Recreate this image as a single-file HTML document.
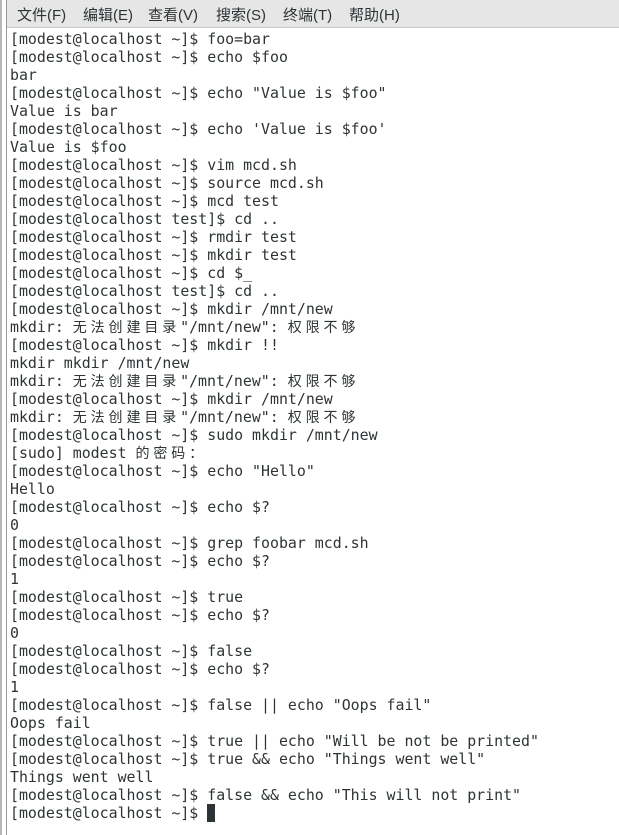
<!DOCTYPE html>
<html><head><meta charset="utf-8"><style>
html,body{margin:0;padding:0;width:619px;height:835px;overflow:hidden;background:#fff}
.l1{position:absolute;left:0;top:0;width:2px;height:835px;background:#b8b8b8}
.l2{position:absolute;left:6px;top:0;width:1px;height:835px;background:#9a9a9a}
.menu{position:absolute;left:7px;top:0;width:612px;height:27px;background:#e6e6e6;border-bottom:1px solid #c8c8c8;font:15px "Liberation Sans","Noto Sans CJK SC",sans-serif;color:#2e3436}
.menu span{position:absolute;top:4px}
pre{position:absolute;left:10px;top:29.5px;margin:0;font:14.9px/18px "DejaVu Sans Mono","Liberation Mono",monospace;color:#2e3436}
.c{display:inline-block;width:17.9px;height:18px;line-height:18px;vertical-align:top;overflow:hidden;text-align:left;font-family:"Noto Sans CJK SC",sans-serif;font-size:14px}
.cur{display:inline-block;width:8px;height:18px;background:#2e3436;vertical-align:top}
</style></head><body>
<div class="l1"></div><div class="l2"></div>
<div class="menu"><span style="left:10px">文件(F)</span><span style="left:76px">编辑(E)</span><span style="left:141px">查看(V)</span><span style="left:209px">搜索(S)</span><span style="left:276px">终端(T)</span><span style="left:342px">帮助(H)</span></div>
<pre>[modest@localhost ~]$ foo=bar
[modest@localhost ~]$ echo $foo
bar
[modest@localhost ~]$ echo "Value is $foo"
Value is bar
[modest@localhost ~]$ echo 'Value is $foo'
Value is $foo
[modest@localhost ~]$ vim mcd.sh
[modest@localhost ~]$ source mcd.sh
[modest@localhost ~]$ mcd test
[modest@localhost test]$ cd ..
[modest@localhost ~]$ rmdir test
[modest@localhost ~]$ mkdir test
[modest@localhost ~]$ cd $_
[modest@localhost test]$ cd ..
[modest@localhost ~]$ mkdir /mnt/new
mkdir: <span class="c">无</span><span class="c">法</span><span class="c">创</span><span class="c">建</span><span class="c">目</span><span class="c">录</span>"/mnt/new": <span class="c">权</span><span class="c">限</span><span class="c">不</span><span class="c">够</span>
[modest@localhost ~]$ mkdir !!
mkdir mkdir /mnt/new
mkdir: <span class="c">无</span><span class="c">法</span><span class="c">创</span><span class="c">建</span><span class="c">目</span><span class="c">录</span>"/mnt/new": <span class="c">权</span><span class="c">限</span><span class="c">不</span><span class="c">够</span>
[modest@localhost ~]$ mkdir /mnt/new
mkdir: <span class="c">无</span><span class="c">法</span><span class="c">创</span><span class="c">建</span><span class="c">目</span><span class="c">录</span>"/mnt/new": <span class="c">权</span><span class="c">限</span><span class="c">不</span><span class="c">够</span>
[modest@localhost ~]$ sudo mkdir /mnt/new
[sudo] modest <span class="c">的</span><span class="c">密</span><span class="c">码</span><span class="c">：</span>
[modest@localhost ~]$ echo "Hello"
Hello
[modest@localhost ~]$ echo $?
0
[modest@localhost ~]$ grep foobar mcd.sh
[modest@localhost ~]$ echo $?
1
[modest@localhost ~]$ true
[modest@localhost ~]$ echo $?
0
[modest@localhost ~]$ false
[modest@localhost ~]$ echo $?
1
[modest@localhost ~]$ false || echo "Oops fail"
Oops fail
[modest@localhost ~]$ true || echo "Will be not be printed"
[modest@localhost ~]$ true &amp;&amp; echo "Things went well"
Things went well
[modest@localhost ~]$ false &amp;&amp; echo "This will not print"
[modest@localhost ~]$ <span class="cur"></span></pre>
</body></html>
